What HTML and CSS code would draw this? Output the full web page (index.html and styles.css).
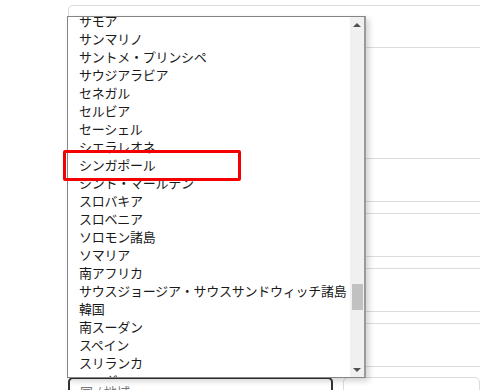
FILE: index.html
```html
<!DOCTYPE html>
<html lang="ja">
<head>
<meta charset="UTF-8" />
<title>国 / 地域</title>
<link rel="stylesheet" href="styles.css">
</head>
<body>
  <main class="page">
    <div class="form">
      <div class="field field-top"></div>
      <div class="field field-first"></div>
      <div class="field"></div>
      <div class="field"></div>
      <div class="field"></div>
      <div class="bottom-row">
        <div class="select-field">国 / 地域</div>
        <div class="field field-side"></div>
      </div>
    </div>

    <div class="dropdown" role="listbox">
      <ul class="options">
        <li>サモア</li>
        <li>サンマリノ</li>
        <li>サントメ・プリンシペ</li>
        <li>サウジアラビア</li>
        <li>セネガル</li>
        <li>セルビア</li>
        <li>セーシェル</li>
        <li>シエラレオネ</li>
        <li>シンガポール</li>
        <li>シント・マールテン</li>
        <li>スロバキア</li>
        <li>スロベニア</li>
        <li>ソロモン諸島</li>
        <li>ソマリア</li>
        <li>南アフリカ</li>
        <li>サウスジョージア・サウスサンドウィッチ諸島</li>
        <li>韓国</li>
        <li>南スーダン</li>
        <li>スペイン</li>
        <li>スリランカ</li>
        <li>スーダン</li>
      </ul>
      <div class="scrollbar">
        <span class="arrow-box"><span class="arrow up"></span></span>
        <span class="track"><span class="thumb"></span></span>
        <span class="arrow-box"><span class="arrow down"></span></span>
      </div>
    </div>

    <div class="highlight"></div>
  </main>
</body>
</html>
```

FILE: styles.css
```css
*, *::before, *::after {
  box-sizing: border-box;
}
body {
  margin: 0;
  background: #fff;
  font-family: "Noto Sans CJK JP", "Noto Sans", sans-serif;
  color: #1a1a1a;
  overflow: hidden;
}
.page {
  position: relative;
  width: 480px;
  height: 390px;
  overflow: hidden;
}

/* form fields behind the open list */
.form {
  padding: 5px 0 0 68px;
  display: flex;
  flex-direction: column;
}
.field {
  width: 500px;
  height: 44px;
  border: 1px solid #dcdcdc;
  border-radius: 5px;
  margin-top: 11px;
}
.field-top {
  height: 43px;
  margin-top: 0;
}
.field-first {
  margin-top: 110px;
}
.bottom-row {
  display: flex;
  gap: 10px;
  margin-top: 10px;
}
.select-field {
  width: 265px;
  height: 40px;
  flex-shrink: 0;
  border: 2px solid #333;
  border-radius: 5px;
  padding: 3px 10px;
  font-size: 13px;
  color: #777;
}
.field-side {
  margin-top: 0;
  height: 40px;
}

/* the open dropdown list */
.dropdown {
  position: absolute;
  left: 67px;
  top: 16px;
  width: 299px;
  height: 362px;
  display: flex;
  background: #fff;
  border: 1px solid #858585;
  border-right: 2px solid #9a9a9a;
  box-shadow: 3px 3px 6px rgba(0, 0, 0, 0.18);
}
.options {
  flex: 1;
  margin: 0;
  padding: 0;
  list-style: none;
  overflow: hidden;
}
.options li {
  height: 18px;
  line-height: 18px;
  padding-left: 11px;
  font-size: 13px;
  letter-spacing: -0.25px;
  white-space: nowrap;
}
.options li:first-child {
  margin-top: -5px;
}
.scrollbar {
  width: 14px;
  background: #f0f0f0;
  display: flex;
  flex-direction: column;
}
.arrow-box {
  height: 17px;
  display: flex;
  align-items: center;
  justify-content: center;
}
.arrow {
  width: 0;
  height: 0;
  border-left: 4px solid transparent;
  border-right: 4px solid transparent;
}
.arrow.up {
  border-bottom: 4px solid #505050;
  margin-top: -2px;
}
.arrow.down {
  border-top: 4px solid #505050;
  margin-top: 2px;
}
.track {
  flex: 1;
}
.thumb {
  display: block;
  width: 11px;
  height: 26px;
  margin: 250px 0 0 2px;
  background: #c1c1c1;
}

/* red annotation box */
.highlight {
  position: absolute;
  left: 63px;
  top: 150px;
  width: 178px;
  height: 31px;
  border: 3px solid #f40000;
  border-radius: 2px;
}
```
